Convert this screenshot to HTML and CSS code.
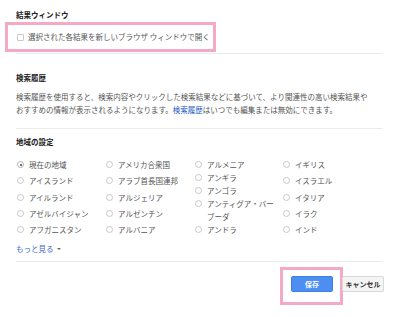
FILE: index.html
```html
<!DOCTYPE html>
<html lang="ja">
<head>
<meta charset="utf-8">
<link rel="stylesheet" href="styles.css">
</head>
<body>
<div class="page">
  <section class="sec sec-window">
    <h2 class="heading">結果ウィンドウ</h2>
    <div class="highlight check-row">
      <span class="checkbox"></span>
      <span class="check-label">選択された各結果を新しいブラウザ ウィンドウで開く</span>
    </div>
  </section>
  <hr class="sep sep-1">
  <section class="sec sec-history">
    <h2 class="heading">検索履歴</h2>
    <p class="desc">検索履歴を使用すると、検索内容やクリックした検索結果などに基づいて、より関連性の高い検索結果やおすすめの情報が表示されるようになります。<a class="link">検索履歴</a>はいつでも編集または無効にできます。</p>
  </section>
  <hr class="sep sep-2">
  <section class="sec sec-region">
    <h2 class="heading">地域の設定</h2>
    <div class="regions">
      <div class="col">
        <label class="radio-item"><span class="radio checked"></span><span class="rlabel">現在の地域</span></label>
        <label class="radio-item"><span class="radio"></span><span class="rlabel">アイスランド</span></label>
        <label class="radio-item"><span class="radio"></span><span class="rlabel">アイルランド</span></label>
        <label class="radio-item"><span class="radio"></span><span class="rlabel">アゼルバイジャン</span></label>
        <label class="radio-item"><span class="radio"></span><span class="rlabel">アフガニスタン</span></label>
      </div>
      <div class="col">
        <label class="radio-item"><span class="radio"></span><span class="rlabel">アメリカ合衆国</span></label>
        <label class="radio-item"><span class="radio"></span><span class="rlabel">アラブ首長国連邦</span></label>
        <label class="radio-item"><span class="radio"></span><span class="rlabel">アルジェリア</span></label>
        <label class="radio-item"><span class="radio"></span><span class="rlabel">アルゼンチン</span></label>
        <label class="radio-item"><span class="radio"></span><span class="rlabel">アルバニア</span></label>
      </div>
      <div class="col">
        <label class="radio-item"><span class="radio"></span><span class="rlabel">アルメニア</span></label>
        <label class="radio-item"><span class="radio"></span><span class="rlabel">アンギラ</span></label>
        <label class="radio-item"><span class="radio"></span><span class="rlabel">アンゴラ</span></label>
        <label class="radio-item"><span class="radio"></span><span class="rlabel">アンティグア・バーブーダ</span></label>
        <label class="radio-item"><span class="radio"></span><span class="rlabel">アンドラ</span></label>
      </div>
      <div class="col">
        <label class="radio-item"><span class="radio"></span><span class="rlabel">イギリス</span></label>
        <label class="radio-item"><span class="radio"></span><span class="rlabel">イスラエル</span></label>
        <label class="radio-item"><span class="radio"></span><span class="rlabel">イタリア</span></label>
        <label class="radio-item"><span class="radio"></span><span class="rlabel">イラク</span></label>
        <label class="radio-item"><span class="radio"></span><span class="rlabel">インド</span></label>
      </div>
    </div>
    <a class="more">もっと見る<span class="caret"></span></a>
  </section>
  <hr class="sep sep-3">
  <div class="actions">
    <div class="highlight save-wrap">
      <button class="btn btn-save">保存</button>
    </div>
    <button class="btn btn-cancel">キャンセル</button>
  </div>
</div>
</body>
</html>
```
FILE: styles.css
```css
html, body {
  margin: 0;
  padding: 0;
  background: #ffffff;
}
body {
  font-family: "Noto Sans CJK JP", "Noto Sans", sans-serif;
  font-size: 7.5px;
  color: #555555;
}
.page {
  width: 367px;
  margin-left: 16px;
  padding-top: 10px;
}
.heading {
  margin: 0;
  font-size: 7.5px;
  line-height: 10px;
  height: 10px;
  font-weight: bold;
  color: #222222;
}
.highlight {
  border: 3px solid #f4a9c7;
  box-sizing: border-box;
}
.check-row {
  margin-top: 2px;
  margin-left: -11px;
  width: 211px;
  height: 30px;
  display: flex;
  align-items: center;
  padding-left: 9px;
}
.checkbox {
  width: 7px;
  height: 7px;
  border: 1px solid #c8c8c8;
  box-sizing: border-box;
  border-radius: 1px;
  background: #fff;
  flex: none;
}
.check-label {
  margin-left: 4px;
  line-height: 10px;
  color: #555;
}
.sep {
  border: 0;
  border-top: 1px solid #ebebeb;
  margin: 0;
  height: 0;
}
.sep-1 { margin-top: 1px; }
.sec-history { margin-top: 19px; }
.desc {
  margin: 7px 0 0 0;
  width: 358px;
  line-height: 13px;
  color: #555;
}
.link {
  color: #2259c4;
}
.sep-2 { margin-top: 12px; }
.sec-region { margin-top: 8px; }
.regions {
  margin-top: 11px;
  display: grid;
  grid-template-columns: 89px 89px 88px 88px;
  height: 78px;
}
.col {
  display: flex;
  flex-direction: column;
  justify-content: space-between;
}
.radio-item {
  display: flex;
  align-items: flex-start;
  line-height: 13px;
  padding-right: 6px;
}
.radio {
  flex: none;
  width: 7px;
  height: 7px;
  margin: 3px 0 0 1px;
  border: 1px solid #c8c8c8;
  border-radius: 50%;
  box-sizing: border-box;
  background: #fff;
  position: relative;
}
.radio.checked {
  border-color: #b0b0b0;
}
.radio.checked::after {
  content: "";
  position: absolute;
  left: 1.5px;
  top: 1.5px;
  width: 2px;
  height: 2px;
  border-radius: 50%;
  background: #444;
}
.rlabel {
  margin-left: 5px;
  color: #555;
}
.more {
  display: inline-flex;
  align-items: center;
  margin-top: 7px;
  line-height: 11px;
  color: #3a68c4;
}
.caret {
  display: inline-block;
  margin-left: 3px;
  width: 0;
  height: 0;
  border-left: 2px solid transparent;
  border-right: 2px solid transparent;
  border-top: 2px solid #666;
}
.sep-3 { margin-top: 7px; }
.actions {
  display: flex;
  justify-content: flex-end;
  align-items: flex-start;
  margin-top: 5px;
  margin-right: -1px;
}
.save-wrap {
  padding: 6px 7px 10px 8px;
}
.btn {
  font-family: "Noto Sans CJK JP", "Noto Sans", sans-serif;
  font-size: 7px;
  font-weight: bold;
  width: 42px;
  height: 16px;
  padding: 0;
  border-radius: 2px;
  box-sizing: border-box;
  display: flex;
  align-items: center;
  justify-content: center;
  line-height: 10px;
}
.btn-save {
  background: #4d8ef3;
  border: 1px solid #3f7fe6;
  color: #ffffff;
}
.btn-cancel {
  margin-top: 9px;
  margin-left: -1px;
  background: #f4f4f4;
  border: 1px solid #d9d9d9;
  color: #333333;
}
```
